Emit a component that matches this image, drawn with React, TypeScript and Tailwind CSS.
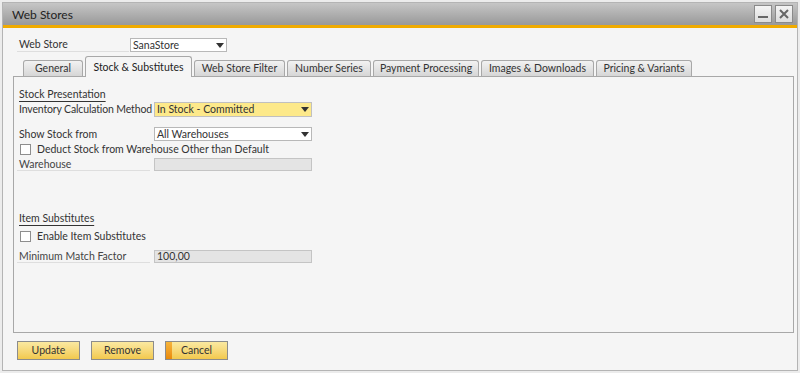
import React from 'react';

const tabs = [
  { label: 'General', w: 'w-[60px]' },
  { label: 'Stock & Substitutes', w: 'w-[107px]', active: true },
  { label: 'Web Store Filter', w: 'w-[91px]' },
  { label: 'Number Series', w: 'w-[84px]' },
  { label: 'Payment Processing', w: 'w-[106px]' },
  { label: 'Images & Downloads', w: 'w-[113px]' },
  { label: 'Pricing & Variants', w: 'w-[96px]' },
];

const Caret = () => (
  <svg width="8" height="5" viewBox="0 0 8 5" className="shrink-0">
    <path d="M0 0 L8 0 L4 5 Z" fill="#333" />
  </svg>
);

const Checkbox = ({ label }: { label: string }) => (
  <div className="flex items-center h-[12px] pl-[1px]">
    <div className="w-[11px] h-[11px] border border-[#8e8e8e] bg-white" />
    <span className="ml-[6px] whitespace-nowrap">{label}</span>
  </div>
);

const App: React.FC = () => {
  return (
    <div
      className="w-[800px] h-[373px] bg-[#ececec] p-[2px] text-[10.5px] leading-[13px] text-[#333]"
      style={{ fontFamily: 'Lato, "Noto Sans", sans-serif' }}
    >
      <div className="w-full h-full border border-[#b4b4b4] flex flex-col bg-[#f5f5f5]">
        {/* title bar */}
        <div className="h-[22px] shrink-0 bg-gradient-to-b from-[#c6c6c6] to-[#999999] flex items-center justify-between pl-[9px] pr-[4px]">
          <span className="text-[12px] text-[#222]">Web Stores</span>
          <div className="flex gap-[3px]">
            <div className="w-[18px] h-[18px] border border-[#8a8a8a] bg-gradient-to-b from-[#f4f4f4] to-[#dcdcdc] flex items-end justify-center pb-[4px]">
              <div className="w-[10px] h-[2px] bg-[#666]" />
            </div>
            <div className="w-[18px] h-[18px] border border-[#8a8a8a] bg-gradient-to-b from-[#f4f4f4] to-[#dcdcdc] flex items-center justify-center">
              <svg width="10" height="10" viewBox="0 0 10 10">
                <path d="M1 1 L9 9 M9 1 L1 9" stroke="#666" strokeWidth="2" />
              </svg>
            </div>
          </div>
        </div>
        <div className="h-[3px] shrink-0 bg-[#f0ab00]" />

        {/* body */}
        <div className="flex-1 flex flex-col pl-[10px] pr-[3px] pt-[10px]">
          {/* web store row */}
          <div className="flex items-center h-[14px]">
            <div className="w-[112px] ml-[4px] pl-[2px] border-b border-[#dedede] h-[14px] flex items-center">Web Store</div>
            <div className="ml-[1px] w-[97px] h-[14px] border border-[#b8b8b8] bg-white flex items-center justify-between px-[2px]">
              <span>SanaStore</span>
              <Caret />
            </div>
          </div>

          {/* tabs */}
          <div className="flex items-end gap-[2px] pl-[10px] mt-[4px] h-[20px] relative z-10">
            {tabs.map((t) =>
              t.active ? (
                <div
                  key={t.label}
                  className={`${t.w} h-[21px] -mb-[1px] border border-b-0 border-[#a8a8a8] rounded-t-[3px] bg-[#f5f5f5] flex items-center justify-center text-[#222] whitespace-nowrap`}
                >
                  {t.label}
                </div>
              ) : (
                <div
                  key={t.label}
                  className={`${t.w} h-[16px] border border-b-0 border-[#a8a8a8] rounded-t-[3px] bg-gradient-to-b from-[#f2f2f2] to-[#d6d6d6] flex items-center justify-center text-[#333] whitespace-nowrap`}
                >
                  {t.label}
                </div>
              )
            )}
          </div>

          {/* panel */}
          <div className="w-[781px] h-[257px] border border-[#a8a8a8] flex flex-col pl-[5px] pt-[11px]">
            <div className="h-[13px]">
              <span className="underline underline-offset-[3px]">Stock Presentation</span>
            </div>
            <div className="flex items-center mt-[1px] h-[15px]">
              <div className="w-[135px] whitespace-nowrap tracking-[-0.15px]">Inventory Calculation Method</div>
              <div className="w-[158px] h-[15px] border border-[#c0c0c0] bg-[#fde98a] flex items-center justify-between px-[2px]">
                <span>In Stock - Committed</span>
                <Caret />
              </div>
            </div>
            <div className="flex items-center mt-[10px] h-[14px]">
              <div className="w-[135px] whitespace-nowrap">Show Stock from</div>
              <div className="w-[158px] h-[14px] border border-[#b8b8b8] bg-white flex items-center justify-between px-[2px]">
                <span>All Warehouses</span>
                <Caret />
              </div>
            </div>
            <div className="mt-[2px]">
              <Checkbox label="Deduct Stock from Warehouse Other than Default" />
            </div>
            <div className="flex items-center mt-[3px] h-[13px]">
              <div className="w-[133px] h-[13px] -ml-[2px] pl-[2px] mr-[4px] border-b border-[#dedede] flex items-center text-[#444] whitespace-nowrap">Warehouse</div>
              <div className="w-[158px] h-[13px] border border-[#c4c4c4] bg-[#e4e4e4]" />
            </div>

            <div className="h-[13px] mt-[41px]">
              <span className="underline underline-offset-[3px]">Item Substitutes</span>
            </div>
            <div className="mt-[5px]">
              <Checkbox label="Enable Item Substitutes" />
            </div>
            <div className="flex items-center mt-[8px] h-[13px]">
              <div className="w-[133px] h-[13px] -ml-[2px] pl-[2px] mr-[4px] border-b border-[#dedede] flex items-center text-[#444] whitespace-nowrap">Minimum Match Factor</div>
              <div className="w-[158px] h-[13px] border border-[#c4c4c4] bg-[#e4e4e4] flex items-center px-[2px]">100,00</div>
            </div>
          </div>

          {/* buttons */}
          <div className="flex gap-[11px] pl-[4px] mt-[8px]">
            {['Update', 'Remove', 'Cancel'].map((b) => (
              <div
                key={b}
                className="relative w-[63px] h-[19px] border border-[#8c8c8c] bg-gradient-to-b from-[#fbe9a0] to-[#f2c94c] flex items-center justify-center text-[#333]"
              >
                {b === 'Cancel' && <div className="absolute left-0 top-0 bottom-0 w-[6px] bg-gradient-to-b from-[#f6b53b] to-[#e98a06]" />}
                <span className="relative">{b}</span>
              </div>
            ))}
          </div>
        </div>
      </div>
    </div>
  );
};

export default App;
